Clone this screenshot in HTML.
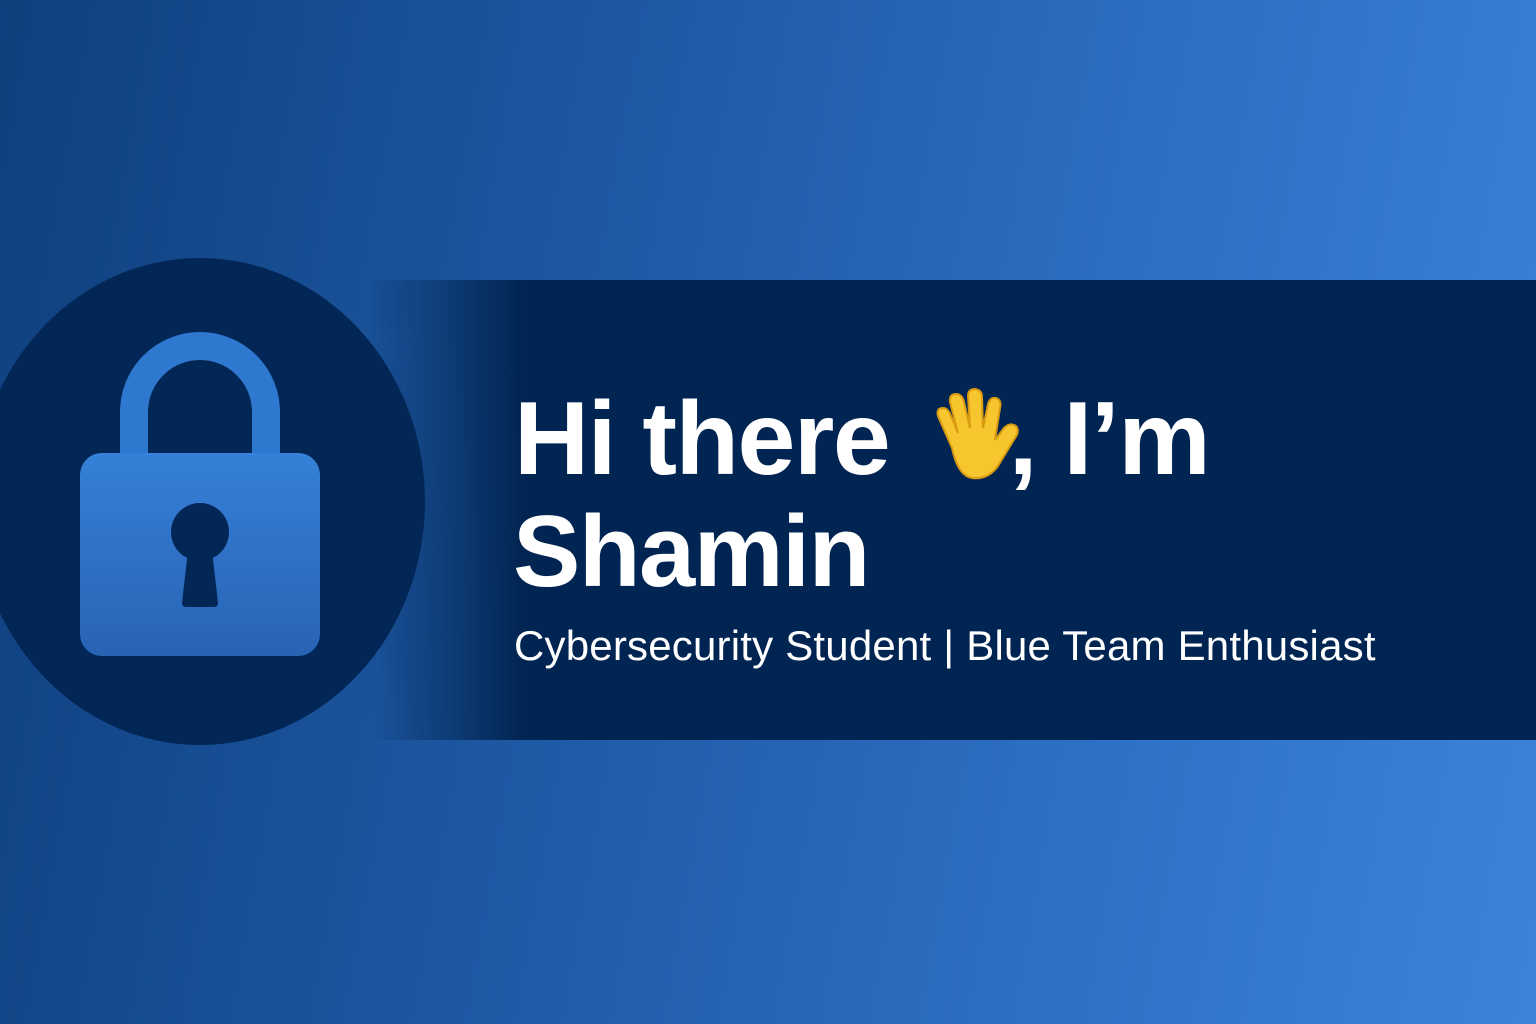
<!DOCTYPE html>
<html><head><meta charset="utf-8"><style>
html,body{margin:0;padding:0}
body{width:1536px;height:1024px;overflow:hidden;position:relative;
background:linear-gradient(100deg,#0f3f7d 0%,#1f5aa6 40%,#2f73c9 75%,#3b84da 100%);
font-family:"Liberation Sans",sans-serif}
.band{position:absolute;left:0;top:280px;width:1536px;height:460px;
background:linear-gradient(90deg,rgba(1,37,82,0) 24%,rgba(1,37,82,1) 34%,#012552 100%)}
.circ{position:absolute;left:-25px;top:258px;width:450px;height:487px;border-radius:50%;background:#022756}
.t{position:absolute;color:#fff;font-weight:bold;white-space:nowrap}
</style></head><body>
<div class="band"></div>
<div class="circ"></div>
<svg style="position:absolute;left:0;top:0" width="440" height="760">
<defs><linearGradient id="g" x1="0" y1="0" x2="0" y2="1"><stop offset="0" stop-color="#3580d8"/><stop offset="1" stop-color="#2863b4"/></linearGradient></defs>
<path d="M134 455 V412 A66 66 0 0 1 266 412 V455" fill="none" stroke="#2f78d0" stroke-width="28"/>
<rect x="80" y="453" width="240" height="203" rx="22" fill="url(#g)"/>
<circle cx="200" cy="532" r="29" fill="#022756"/>
<path d="M188 550 L182 603 Q182 607 186 607 L214 607 Q218 607 218 603 L212 550 Z" fill="#022756"/>
</svg>
<div class="t" style="left:514px;top:380px;font-size:104px;letter-spacing:-1.5px">Hi there <span style="display:inline-block;width:92px"></span>, I’m</div>
<svg style="position:absolute;left:932px;top:388px" width="92" height="95" viewBox="0 0 92 95">
<path d="M20 60 L6 28 Q4 20 11 20 Q16 20 19 28 L26 45 L18 14 Q17 6 24 6 Q30 6 32 14 L38 40 L36 8 Q36 1 43 1 Q50 2 50 9 L51 40 L56 16 Q58 9 64 10 Q70 12 68 20 L63 52 L72 40 Q78 34 84 38 Q88 43 83 50 L66 78 Q56 92 40 90 Q26 88 20 60 Z" fill="#f7c52e" stroke="#d99a12" stroke-width="2"/>
</svg>
<div class="t" style="left:513px;top:495px;font-size:101px;letter-spacing:-1.5px">Shamin</div>
<div class="t" style="left:514px;top:622px;font-size:42px;font-weight:normal;letter-spacing:0.2px">Cybersecurity Student | Blue Team Enthusiast</div>
</body></html>
